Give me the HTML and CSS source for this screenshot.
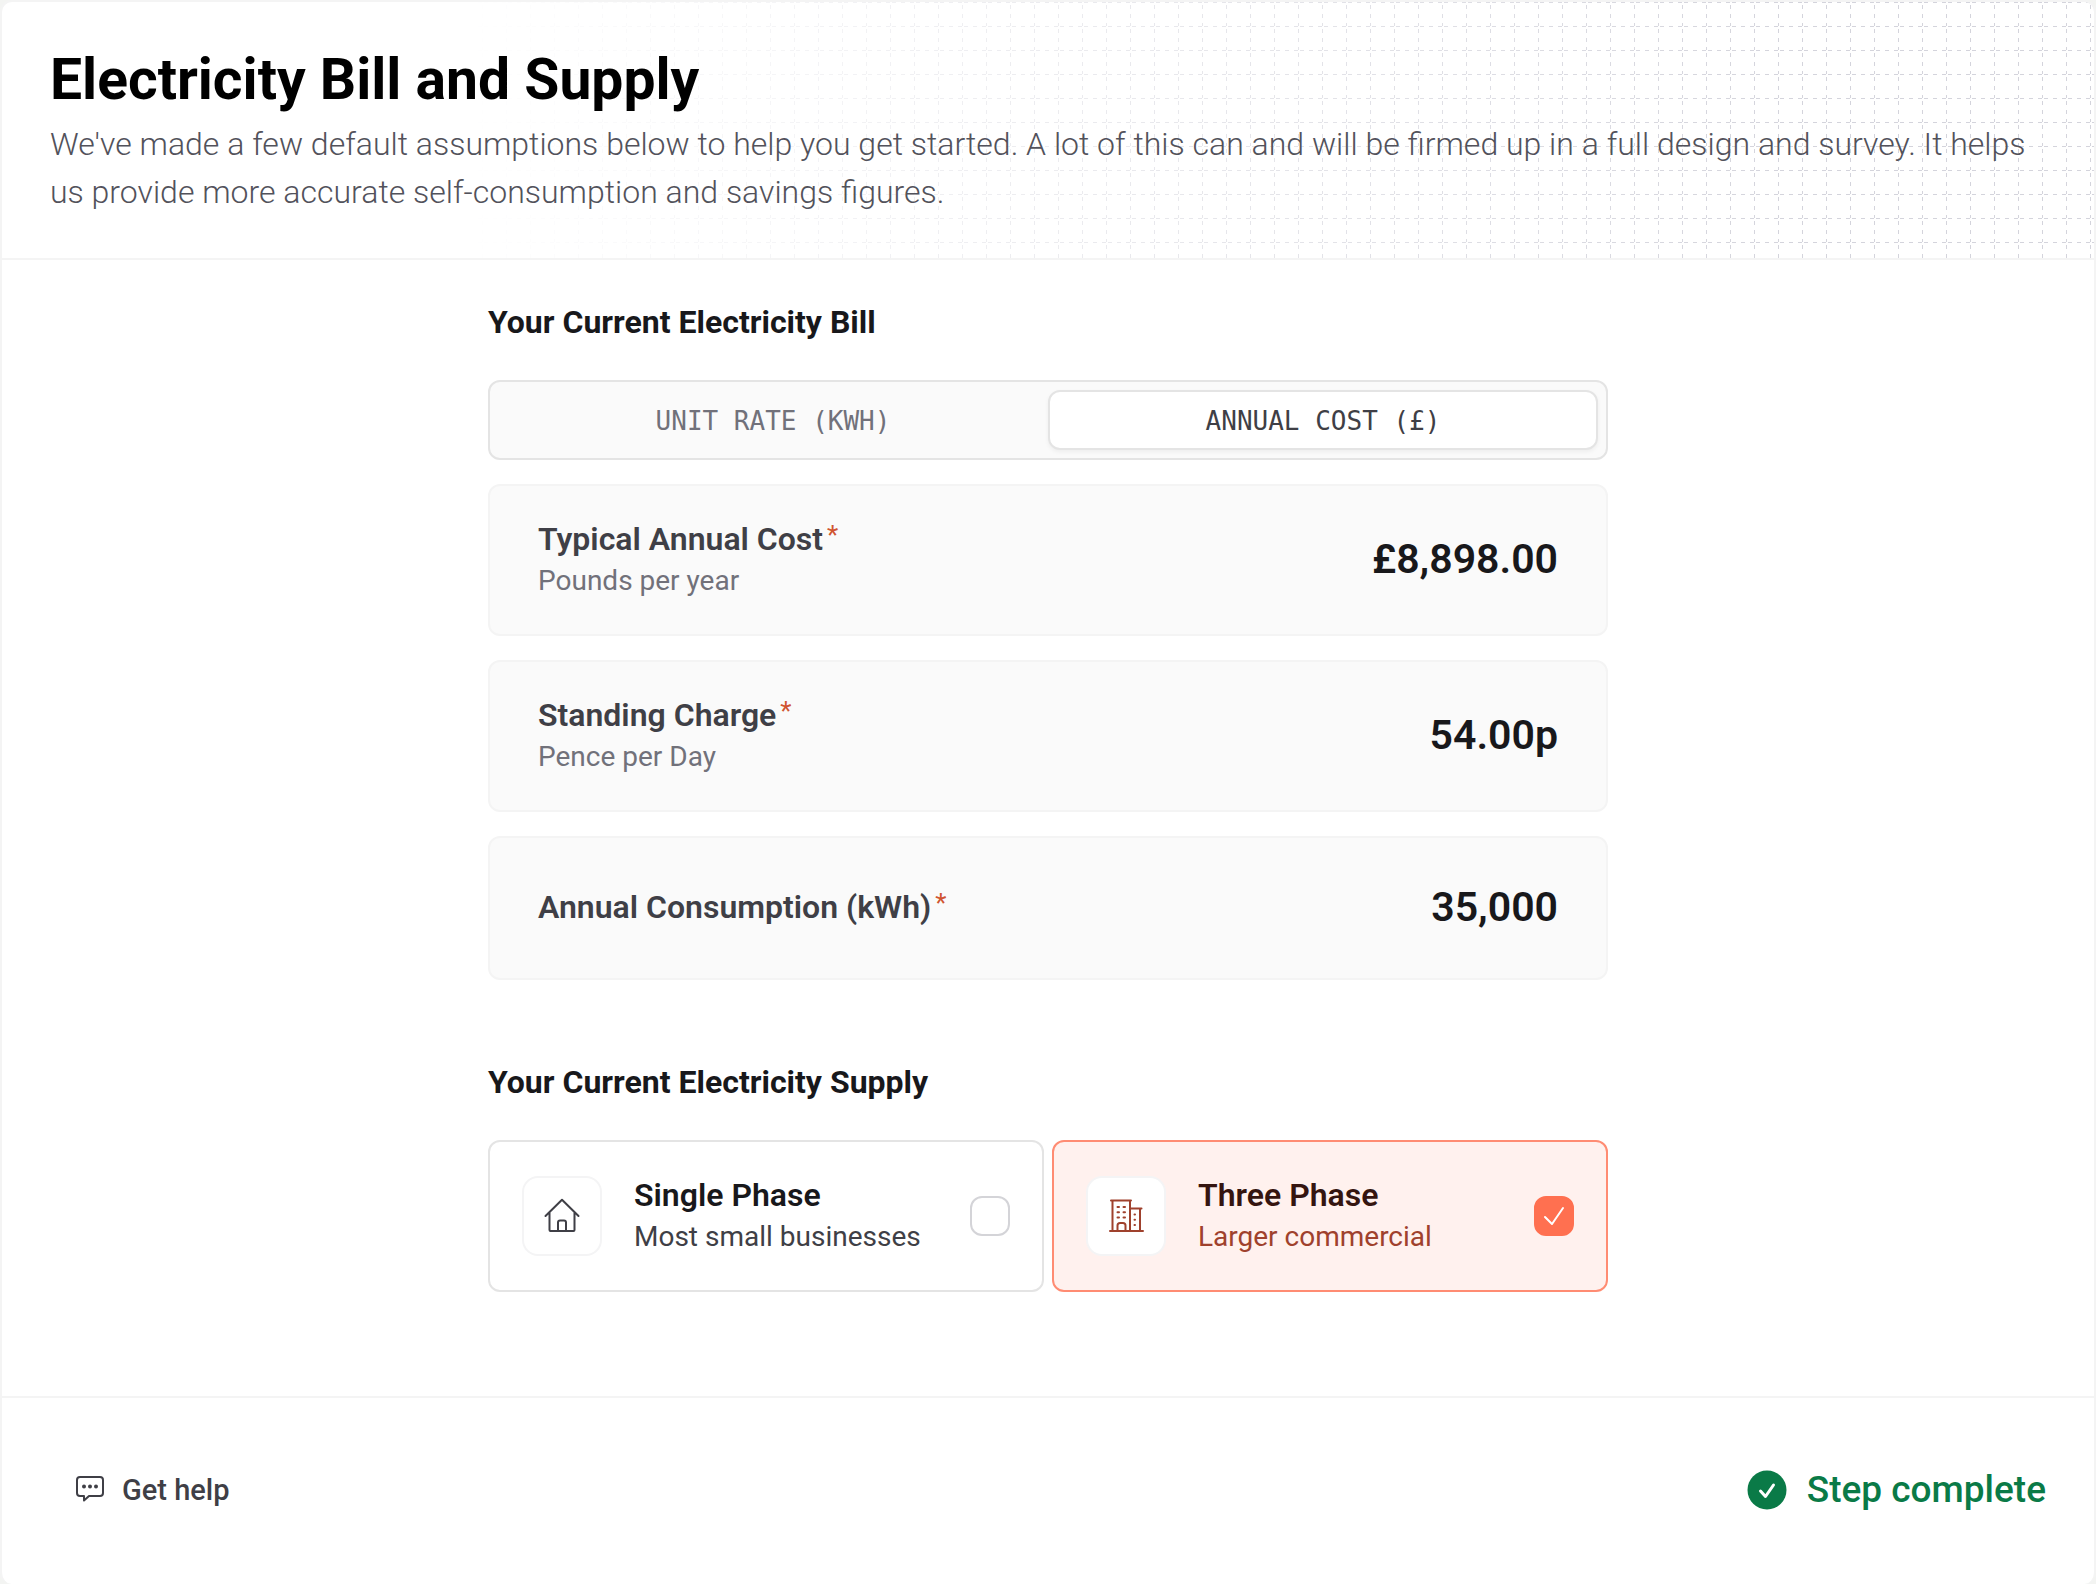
FILE: index.html
```html
<!DOCTYPE html>
<html lang="en">
<head>
<meta charset="utf-8">
<meta name="viewport" content="width=device-width, initial-scale=1">
<title>Electricity Bill and Supply</title>
<link rel="stylesheet" href="styles.css">
</head>
<body>
<main class="panel">
  <header class="panel-header">
    <svg class="grid-pattern" aria-hidden="true">
      <defs>
        <pattern id="grid" width="24" height="24" patternUnits="userSpaceOnUse">
          <path d="M0 .5H24" stroke="#d4d4dc" stroke-dasharray="4 5" stroke-dashoffset="-2"/>
          <path d="M.5 0V24" stroke="#d4d4dc" stroke-dasharray="4 5" stroke-dashoffset="-3"/>
        </pattern>
      </defs>
      <rect width="100%" height="100%" fill="url(#grid)"/>
    </svg>
    <h1 class="title">Electricity Bill and Supply</h1>
    <p class="intro">We've made a few default assumptions below to help you get started. A lot of this can and will be firmed up in a full design and survey. It helps us provide more accurate self-consumption and savings figures.</p>
  </header>

  <form class="content">
    <section class="section">
      <h2 class="section-title">Your Current Electricity Bill</h2>
      <div class="segmented">
        <button type="button" class="segment">Unit rate (kWh)</button>
        <button type="button" class="segment segment-active" aria-pressed="true">Annual cost (£)</button>
      </div>
      <div class="field">
        <label class="field-label" for="cost"><span class="field-name">Typical Annual Cost<span class="required">*</span></span><span class="field-hint">Pounds per year</span></label>
        <input class="field-value" id="cost" type="text" value="£8,898.00">
      </div>
      <div class="field">
        <label class="field-label" for="charge"><span class="field-name">Standing Charge<span class="required">*</span></span><span class="field-hint">Pence per Day</span></label>
        <input class="field-value" id="charge" type="text" value="54.00p">
      </div>
      <div class="field field-short">
        <label class="field-label" for="usage"><span class="field-name">Annual Consumption (kWh)<span class="required">*</span></span></label>
        <input class="field-value" id="usage" type="text" value="35,000">
      </div>
    </section>

    <section class="section">
      <h2 class="section-title">Your Current Electricity Supply</h2>
      <div class="options">
        <label class="option">
          <span class="option-icon">
            <svg width="36" height="36" viewBox="0 0 36 36" fill="none" stroke="currentColor" stroke-width="2" stroke-linecap="round" stroke-linejoin="round" aria-hidden="true">
              <path d="M1.500 18 18 1.700 34.500 18M5.500 14.500V32a1 1 0 0 0 1 1h23a1 1 0 0 0 1-1V14.500M14 33V24.500a2 2 0 0 1 2-2h4a2 2 0 0 1 2 2V33"/>
            </svg>
          </span>
          <span class="option-text"><span class="option-name">Single Phase</span><span class="option-hint">Most small businesses</span></span>
          <input class="tick" type="checkbox">
        </label>
        <label class="option option-selected">
          <span class="option-icon">
            <svg width="36" height="36" viewBox="0 0 36 36" fill="none" stroke="currentColor" stroke-width="2" stroke-linecap="round" stroke-linejoin="round" aria-hidden="true">
              <path d="M2 33h33M3 2.500h20M4.500 2.500V33M22 2.500V33M22 10.500h11.500M32 10.500V33M9.500 33V27.500a2.500 2.500 0 0 1 2.500-2.500h3a2.500 2.500 0 0 1 2.500 2.500V33"/>
              <path d="M9.500 9h1.500M15.500 9h1.500M9.500 14.200h1.500M15.500 14.200h1.500M9.500 19.400h1.500M15.500 19.400h1.500M26.500 16.500h.5M26.500 21.700h.5M26.500 26.900h.5"/>
            </svg>
          </span>
          <span class="option-text"><span class="option-name">Three Phase</span><span class="option-hint">Larger commercial</span></span>
          <span class="tick-wrap">
            <input class="tick" type="checkbox" checked>
            <svg class="tick-mark" width="40" height="40" viewBox="0 0 40 40" fill="none" stroke="#fff" stroke-width="2" stroke-linecap="round" stroke-linejoin="round" aria-hidden="true"><path d="M11 21l7 7L29 12"/></svg>
          </span>
        </label>
      </div>
    </section>
  </form>

  <footer class="panel-footer">
    <button type="button" class="help">
      <svg width="28" height="28" viewBox="0 0 28 28" fill="none" stroke="currentColor" stroke-width="2" stroke-linejoin="round" aria-hidden="true">
        <path d="M4 1h20a3 3 0 0 1 3 3v13a3 3 0 0 1-3 3H13l-5 4.500V20H4a3 3 0 0 1-3-3V4a3 3 0 0 1 3-3z"/>
        <g fill="currentColor" stroke="none"><circle cx="8" cy="10.500" r="2"/><circle cx="14" cy="10.500" r="2"/><circle cx="20" cy="10.500" r="2"/></g>
      </svg>
      Get help
    </button>
    <p class="status">
      <svg width="40" height="40" viewBox="0 0 40 40" aria-hidden="true"><circle cx="20" cy="20" r="19.500" fill="#0a7a47"/><path d="M13.500 21l5 5.500L26.500 15" fill="none" stroke="#fff" stroke-width="3" stroke-linecap="round" stroke-linejoin="round"/></svg>
      Step complete
    </p>
  </footer>
</main>
</body>
</html>
```
FILE: styles.css
```css
* {
  box-sizing: border-box;
}

body {
  margin: 0;
  background: #f3f4f2;
  font-family: Roboto, "Liberation Sans", sans-serif;
  color: #18181b;
}

h1, h2, p {
  margin: 0;
}

button, input {
  font: inherit;
  color: inherit;
}

.panel {
  min-height: 100vh;
  display: flex;
  flex-direction: column;
  background: #fff;
  border: 2px solid #f4f4f4;
  border-bottom: 0;
  border-radius: 12px;
  overflow: hidden;
}

.panel-header {
  position: relative;
  padding: 50px 48px 42px;
  border-bottom: 2px solid #f4f4f4;
}

.grid-pattern {
  position: absolute;
  inset: 0;
  width: 100%;
  height: 100%;
  -webkit-mask-image: linear-gradient(to right, transparent 22%, #000 85%);
  mask-image: linear-gradient(to right, transparent 22%, #000 85%);
}

.title {
  position: relative;
  font-size: 57px;
  line-height: 56px;
  font-weight: 700;
  color: #000;
}

.intro {
  position: relative;
  margin-top: 12px;
  font-size: 32px;
  line-height: 48px;
  font-weight: 300;
  color: #52525b;
}

.content {
  flex: 1;
  width: 100%;
  max-width: 1168px;
  margin: 0 auto;
  padding: 38px 24px 0;
  display: flex;
  flex-direction: column;
  gap: 78px;
}

.section {
  display: flex;
  flex-direction: column;
  gap: 24px;
}

.section-title {
  margin-bottom: 10px;
  font-size: 32px;
  line-height: 48px;
  font-weight: 700;
}

.segmented {
  display: flex;
  padding: 8px;
  background: #fafafa;
  border: 2px solid #e4e4e4;
  border-radius: 12px;
}

.segment {
  flex: 1;
  height: 60px;
  padding: 2px 0 0;
  border: 2px solid transparent;
  border-radius: 12px;
  background: none;
  font-family: "DejaVu Sans Mono", monospace;
  font-size: 26px;
  text-transform: uppercase;
  color: #71717a;
}

.segment-active {
  background: #fff;
  border-color: #e4e4e4;
  box-shadow: 0 2px 4px rgba(0, 0, 0, 0.05);
  color: #3f3f46;
}

.field {
  display: flex;
  align-items: center;
  justify-content: space-between;
  min-height: 152px;
  padding: 0 48px 2px;
  background: #fafafa;
  border: 2px solid #f4f4f4;
  border-radius: 12px;
}

.field-short {
  min-height: 144px;
}

.field-label {
  display: flex;
  flex-direction: column;
}

.field-name {
  display: flex;
  gap: 4px;
  font-size: 32px;
  line-height: 44px;
  font-weight: 600;
  color: #3f3f46;
}

.required {
  font-size: 26px;
  line-height: 36px;
  font-weight: 400;
  color: #d05430;
}

.field-hint {
  font-size: 28px;
  line-height: 40px;
  color: #71717a;
}

.field-value {
  width: 320px;
  padding: 0;
  border: 0;
  background: none;
  font-size: 41px;
  line-height: 48px;
  font-weight: 600;
  text-align: right;
}

.options {
  display: grid;
  grid-template-columns: 1fr 1fr;
  gap: 8px;
}

.option {
  display: flex;
  align-items: center;
  gap: 32px;
  min-height: 152px;
  padding: 0 32px;
  border: 2px solid #e4e4e4;
  border-radius: 12px;
}

.option-icon {
  display: flex;
  align-items: center;
  justify-content: center;
  width: 80px;
  height: 80px;
  background: #fff;
  border: 2px solid #f4f4f5;
  border-radius: 16px;
  color: #3f3f46;
}

.option-text {
  flex: 1;
  display: flex;
  flex-direction: column;
  padding-bottom: 2px;
}

.option-name {
  font-size: 32px;
  line-height: 44px;
  font-weight: 600;
}

.option-hint {
  font-size: 28px;
  line-height: 40px;
  color: #3f3f46;
}

.tick {
  appearance: none;
  display: block;
  width: 40px;
  height: 40px;
  margin: 0;
  background: #fff;
  border: 2px solid #d4d4d8;
  border-radius: 12px;
}

.tick:checked {
  background: #ff7050;
  border-color: #ff7050;
}

.tick-wrap {
  position: relative;
}

.tick-mark {
  position: absolute;
  inset: 0;
}

.option-selected {
  background: #fff1ee;
  border-color: #ff8c73;
}

.option-selected .option-name {
  color: #351510;
}

.option-selected .option-icon,
.option-selected .option-hint {
  color: #9f412d;
}

.panel-footer {
  display: flex;
  align-items: center;
  justify-content: space-between;
  min-height: 188px;
  padding: 0 48px 2px;
  border-top: 2px solid #f4f4f4;
}

.help {
  display: flex;
  align-items: center;
  gap: 18px;
  padding: 0 26px;
  border: 0;
  background: none;
  font-size: 29px;
  line-height: 40px;
  font-weight: 500;
  color: #3f3f46;
}

.status {
  display: flex;
  align-items: center;
  gap: 20px;
  font-size: 37px;
  line-height: 48px;
  font-weight: 500;
  color: #0a7a47;
}
```
